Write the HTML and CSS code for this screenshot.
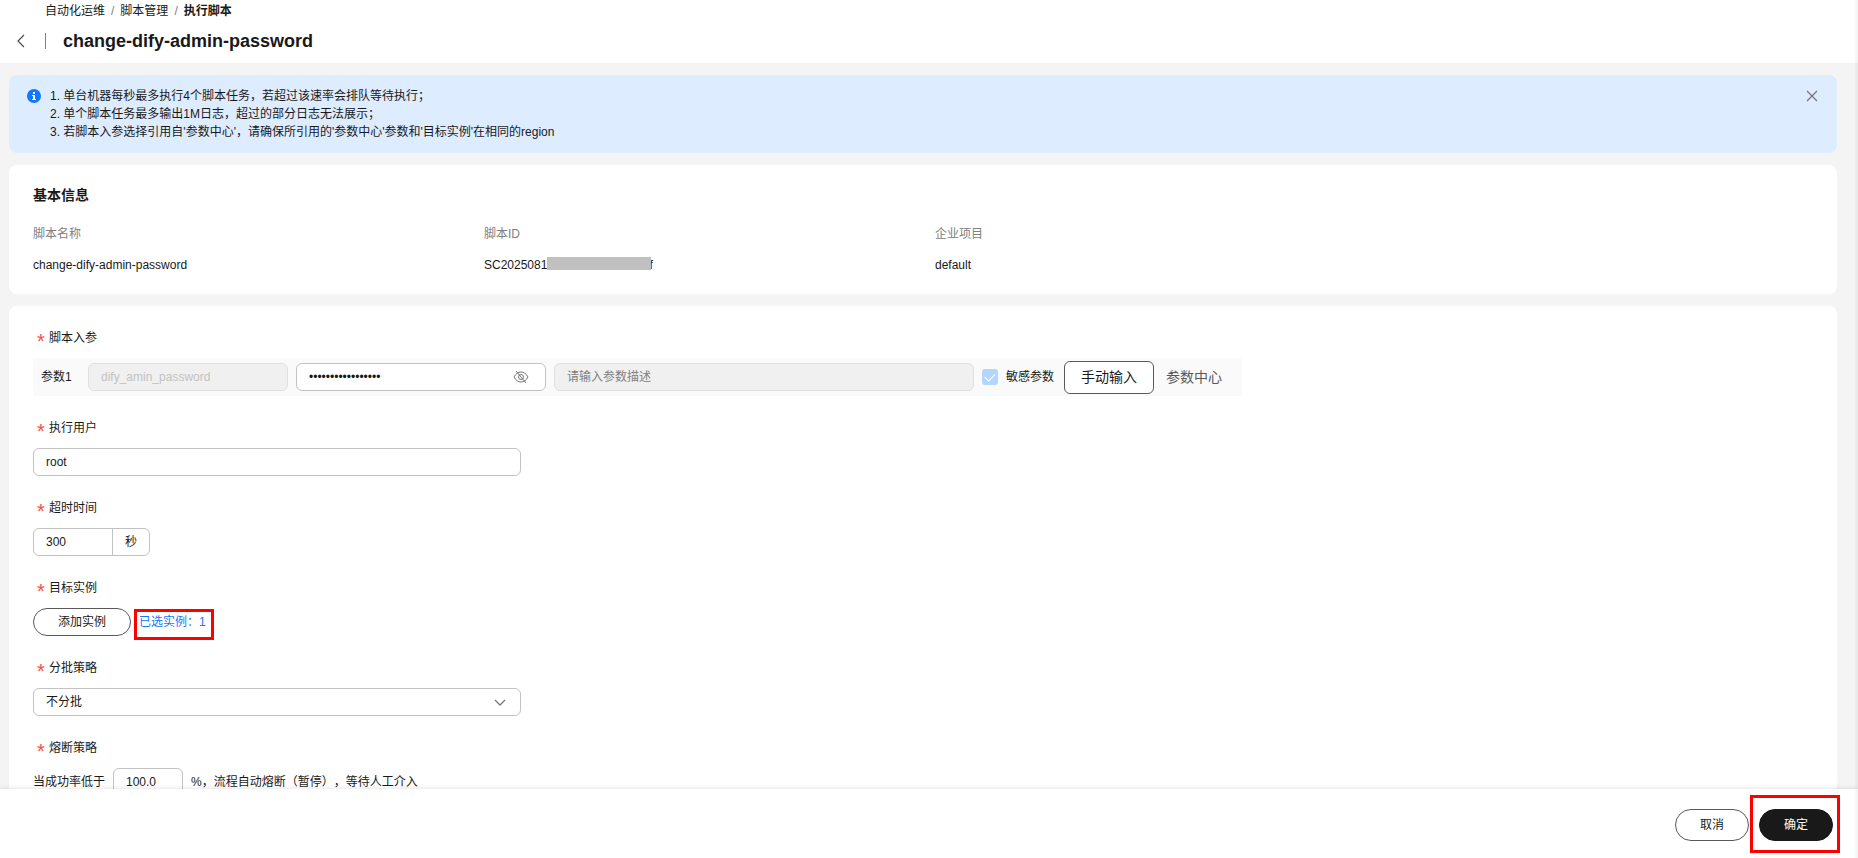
FILE: index.html
```html
<!DOCTYPE html>
<html lang="zh-CN">
<head>
    <meta charset="UTF-8">
    <meta name="viewport" content="width=device-width, initial-scale=1.0">
    <title>执行脚本</title>
    <link rel="stylesheet" href="styles.css">
</head>
<body>
    <main class="content">
        <header class="page-header">
            <nav class="breadcrumb">
                <a href="#">自动化运维</a>
                <span class="sep">/</span>
                <a href="#">脚本管理</a>
                <span class="sep">/</span>
                <strong>执行脚本</strong>
            </nav>
            <div class="title-row">
                <button type="button" class="icon-btn back-btn" aria-label="返回">
                    <svg width="8" height="14" viewBox="0 0 8 14"><path d="M7 1L1 7l6 6" fill="none" stroke="#4d4d4d" stroke-width="1.2"/></svg>
                </button>
                <span class="divider"></span>
                <h1>change-dify-admin-password</h1>
            </div>
        </header>

        <div class="alert">
            <svg class="info-icon" width="14" height="14" viewBox="0 0 14 14">
                <circle cx="7" cy="7" r="7" fill="#1476ff"/>
                <path d="M6 3h2v2H6zM5 6h3v4h1v1H5v-1h1V7H5z" fill="#fff"/>
            </svg>
            <div class="alert-text">
                <p>1. 单台机器每秒最多执行4个脚本任务，若超过该速率会排队等待执行；</p>
                <p>2. 单个脚本任务最多输出1M日志，超过的部分日志无法展示；</p>
                <p>3. 若脚本入参选择引用自'参数中心'，请确保所引用的'参数中心'参数和'目标实例'在相同的region</p>
            </div>
            <button type="button" class="icon-btn close-btn" aria-label="关闭">
                <svg width="12" height="12" viewBox="0 0 12 12"><path d="M1 1l10 10M11 1L1 11" fill="none" stroke="#777" stroke-width="1.3"/></svg>
            </button>
        </div>

        <section class="card">
            <h2>基本信息</h2>
            <dl class="info-grid">
                <div>
                    <dt>脚本名称</dt>
                    <dd>change-dify-admin-password</dd>
                </div>
                <div>
                    <dt>脚本ID</dt>
                    <dd class="script-id">SC2025081<span class="mask"></span>f</dd>
                </div>
                <div>
                    <dt>企业项目</dt>
                    <dd>default</dd>
                </div>
            </dl>
        </section>

        <form class="card form-card" id="runForm">
            <div class="form-group">
                <label class="required" for="paramValue">脚本入参</label>
                <div class="param-row">
                    <label class="param-name" for="paramKey">参数1</label>
                    <input class="field param-key" type="text" id="paramKey" value="dify_amin_password" disabled>
                    <div class="field password-box">
                        <input type="password" id="paramValue" value="password-password">
                        <button type="button" class="icon-btn" aria-label="显示密码">
                            <svg width="16" height="14" viewBox="0 0 16 14" fill="none" stroke="#777">
                                <path d="M1 7c1.800-3.300 4.200-5 7-5s5.200 1.700 7 5c-1.800 3.300-4.200 5-7 5S2.800 10.300 1 7z"/>
                                <circle cx="8" cy="7" r="2.500"/>
                                <path d="M3 1l10 12"/>
                            </svg>
                        </button>
                    </div>
                    <input class="field param-desc" type="text" aria-label="参数描述" placeholder="请输入参数描述" disabled>
                    <label class="check">
                        <input type="checkbox" checked disabled>
                        敏感参数
                    </label>
                    <div class="tabs">
                        <button type="button" class="tab active">手动输入</button>
                        <button type="button" class="tab">参数中心</button>
                    </div>
                </div>
            </div>

            <div class="form-group">
                <label class="required" for="user">执行用户</label>
                <input class="field wide" type="text" id="user" value="root">
            </div>

            <div class="form-group">
                <label class="required" for="timeout">超时时间</label>
                <div class="field timeout-box">
                    <input type="text" id="timeout" value="300">
                    <span class="unit">秒</span>
                </div>
            </div>

            <div class="form-group">
                <label class="required" for="addInstance">目标实例</label>
                <div class="instance-row">
                    <button type="button" class="btn btn-small" id="addInstance">添加实例</button>
                    <a class="selected-link marked" href="#">已选实例：1</a>
                </div>
            </div>

            <div class="form-group">
                <label class="required" for="batch">分批策略</label>
                <div class="select-box wide">
                    <select class="field" id="batch">
                        <option>不分批</option>
                        <option>自动分批</option>
                        <option>手动分批</option>
                    </select>
                    <svg class="chevron" width="12" height="8" viewBox="0 0 12 8"><path d="M1 1l5 5 5-5" fill="none" stroke="#777" stroke-width="1.3"/></svg>
                </div>
            </div>

            <div class="form-group">
                <label class="required" for="rate">熔断策略</label>
                <div class="rate-row">
                    <span>当成功率低于</span>
                    <input class="field rate" type="text" id="rate" value="100.0">
                    <span>%，流程自动熔断（暂停），等待人工介入</span>
                </div>
            </div>
        </form>
    </main>

    <footer class="footer">
        <button type="button" class="btn">取消</button>
        <span class="marked submit-wrap">
            <button type="submit" form="runForm" class="btn btn-primary">确定</button>
        </span>
    </footer>
</body>
</html>
```
FILE: styles.css
```css
* {
    box-sizing: border-box;
}

body {
    display: flex;
    flex-direction: column;
    height: 100vh;
    margin: 0;
    background: #f4f4f4;
    color: #191919;
    font-family: "Liberation Sans", "Noto Sans CJK SC", sans-serif;
    font-size: 12px;
    line-height: 18px;
    text-spacing-trim: space-all;
}

/* soft shade along the right edge of the window */
body::after {
    content: "";
    position: fixed;
    top: 0;
    right: 0;
    bottom: 0;
    z-index: 2;
    width: 4px;
    background: linear-gradient(to right, transparent, rgba(0, 0, 0, 0.06));
    pointer-events: none;
}

h1, h2, p, dl, dd {
    margin: 0;
}

button, input, select {
    color: inherit;
    font: inherit;
}

a {
    color: inherit;
    text-decoration: none;
}

svg {
    display: block;
}

.icon-btn {
    padding: 0;
    border: none;
    background: none;
    cursor: pointer;
}

.content {
    flex: 1;
    min-height: 0;
    overflow-y: auto;
    scrollbar-width: none;
}

/* header */
.page-header {
    height: 63px;
    background: #fff;
}

.breadcrumb {
    display: flex;
    gap: 6px;
    padding: 2px 0 0 45px;
}

.sep {
    color: #808080;
}

.title-row {
    display: flex;
    align-items: center;
    height: 42px;
    padding-left: 17px;
}

.divider {
    width: 1px;
    height: 16px;
    margin: 0 17px 0 20px;
    background: #808080;
}

h1 {
    font-size: 18px;
    line-height: 24px;
}

/* alert */
.alert {
    display: flex;
    align-items: flex-start;
    margin: 12px 21px 12px 9px;
    padding: 12px 19px 12px 18px;
    border-radius: 8px;
    background: #deecff;
}

.info-icon {
    margin: 2px 9px 0 0;
}

.alert-text {
    flex: 1;
}

.close-btn {
    margin-top: 3px;
}

/* cards */
.card {
    margin: 0 21px 12px 9px;
    padding: 20px 24px 19px;
    border-radius: 8px;
    background: #fff;
}

h2 {
    margin-bottom: 19px;
    font-size: 14px;
    line-height: 20px;
}

.info-grid {
    display: grid;
    grid-template-columns: repeat(4, 1fr);
    gap: 24px;
    line-height: 20px;
}

.info-grid dt {
    margin-bottom: 11px;
    color: #808080;
}

.script-id {
    display: flex;
}

.mask {
    position: relative;
    width: 104px;
    height: 13px;
    margin: 2px -2px 0 0;
    background: #c0c0c0;
}

/* form */
.form-card {
    padding-top: 22px;
}

.form-group {
    margin-bottom: 22px;
}

.required {
    display: block;
    width: fit-content;
    margin-bottom: 10px;
    padding-left: 4px;
    line-height: 20px;
}

.required::before {
    content: "*";
    display: inline-block;
    width: 12px;
    color: #f24b4b;
    font-size: 20px;
    line-height: 12px;
    vertical-align: -6px;
}

.field {
    height: 28px;
    padding: 0 12px;
    border: 1px solid #c2c2c2;
    border-radius: 6px;
    background: #fff;
    outline: none;
}

.field:disabled {
    border-color: #dfdfdf;
    background: #f0f0f0;
    color: #c2c2c2;
}

.field::placeholder {
    color: #808080;
}

.wide {
    width: 488px;
}

.param-row {
    display: flex;
    align-items: center;
    gap: 8px;
    width: fit-content;
    height: 38px;
    padding: 0 8px;
    background: #fafafa;
}

.param-name {
    width: 39px;
}

.param-key {
    width: 200px;
}

.password-box {
    display: flex;
    align-items: center;
    width: 250px;
    padding-right: 16px;
}

.password-box input,
.timeout-box input {
    flex: 1;
    min-width: 0;
    padding: 0;
    border: none;
    background: none;
    outline: none;
}

.param-desc {
    width: 420px;
}

.check {
    display: flex;
    align-items: center;
    gap: 8px;
}

.check input {
    appearance: none;
    width: 16px;
    height: 16px;
    margin: 0;
    border-radius: 3px;
    background: #b3d6ff;
}

.check input:checked::after {
    content: "";
    display: block;
    width: 5px;
    height: 9px;
    margin: 2px 0 0 5px;
    border: solid #fff;
    border-width: 0 1px 1px 0;
    transform: rotate(45deg);
}

.tabs {
    display: flex;
    padding-left: 2px;
}

.tab {
    height: 33px;
    padding: 0 11px;
    border: 1px solid transparent;
    border-radius: 6px;
    background: none;
    color: #595959;
    font-size: 14px;
    cursor: pointer;
}

.tab.active {
    padding: 0 16px;
    border-color: #595959;
    background: #fff;
    color: #191919;
}

.timeout-box {
    display: flex;
    width: 117px;
    padding-right: 0;
}

.unit {
    width: 37px;
    border-left: 1px solid #c2c2c2;
    line-height: 26px;
    text-align: center;
}

.instance-row,
.rate-row {
    display: flex;
    align-items: center;
    gap: 8px;
}

.selected-link {
    color: #1476ff;
}

.select-box {
    position: relative;
}

.select-box select {
    appearance: none;
    width: 100%;
}

.chevron {
    position: absolute;
    top: 11px;
    right: 15px;
    pointer-events: none;
}

.rate {
    width: 70px;
}

/* buttons */
.btn {
    width: 74px;
    height: 32px;
    padding: 0;
    border: 1px solid #595959;
    border-radius: 16px;
    background: #fff;
    cursor: pointer;
}

.btn-small {
    width: 98px;
    height: 28px;
    border-radius: 14px;
}

.btn-primary {
    display: block;
    border-color: #191919;
    background: #191919;
    color: #fff;
}

.footer {
    display: flex;
    align-items: center;
    justify-content: flex-end;
    gap: 10px;
    height: 69px;
    padding: 3px 25px 0 0;
    background: #fff;
    box-shadow: 0 -1px 4px rgba(0, 0, 0, 0.1);
    z-index: 1;
}

/* red frame laid over an element */
.marked {
    position: relative;
}

.marked::after {
    content: "";
    position: absolute;
    inset: -4px -8px -9px -5px;
    border: 3px solid #ff0000;
    pointer-events: none;
}

.submit-wrap::after {
    inset: -14px -7px -12px -9px;
}
```
